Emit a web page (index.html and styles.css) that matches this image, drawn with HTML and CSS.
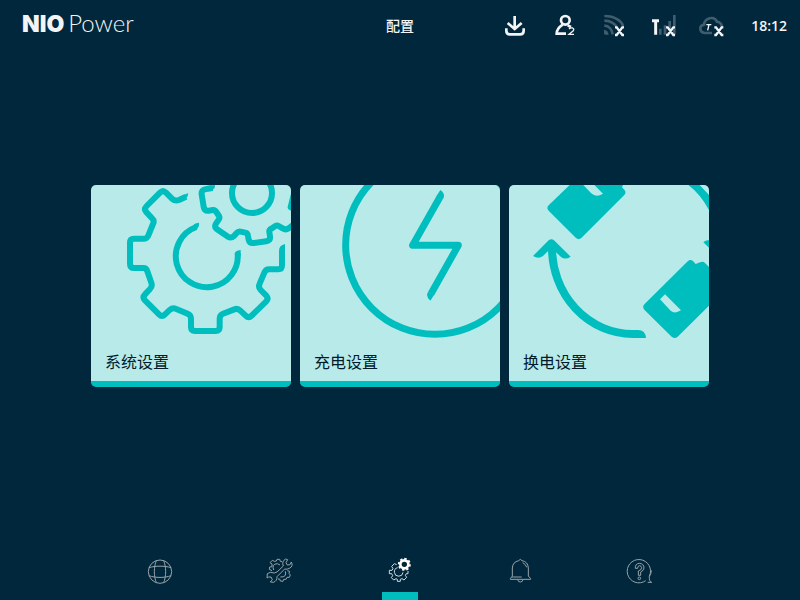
FILE: index.html
```html
<!DOCTYPE html>
<html lang="zh-CN">
<head>
<meta charset="utf-8">
<meta name="viewport" content="width=device-width, initial-scale=1">
<title>配置</title>
<link rel="stylesheet" href="styles.css">
</head>
<body>
<header class="topbar">
  <div class="brand"><span class="brand-bold">NIO</span><span class="brand-light">Power</span></div>
  <h1 class="title">配置</h1>
  <div class="status">
    <svg class="status-icon" viewBox="393 42 96 72" aria-hidden="true">
      <g class="line bold"><path d="M434 48V85M413 69L434 87L455 69M409 85V92Q409 103 420 103H450Q461 103 461 92V85"/></g>
    </svg>
    <svg class="status-icon" viewBox="540 42 96 72" aria-hidden="true">
      <g class="line bold"><circle cx="586" cy="61" r="13"/><path d="M578 74C566 82 560 90 560 101H588M593 76L603 81"/></g>
      <path class="line digit" d="M597 87Q602 82 608 84Q614 87 609 93L597 103H612"/>
    </svg>
    <svg class="status-icon" viewBox="27 42 96 72" aria-hidden="true">
      <g class="line dim"><path d="M43 48C75 48 97 64 99 79M43 62C62 62 77 72 82 84M43 77C56 77 66 88 68 103"/></g>
      <path class="fill-dim" d="M42 89Q54 91 56 104H46Q42 104 42 100Z"/>
      <path class="line cross" d="M75 82H80L97 105H102M102 82H97L80 105H75"/>
    </svg>
    <svg class="status-icon" viewBox="174 42 96 72" aria-hidden="true">
      <g class="line dim"><path d="M211 86V104M225 76V104M239 63V88M253 45V104"/></g>
      <path class="line letter" d="M186 62H207M197 62V104"/>
      <path class="line cross" d="M228 82H233L250 105H255M255 82H250L233 105H228"/>
    </svg>
    <svg class="status-icon" viewBox="321 42 96 72" aria-hidden="true">
      <path class="line dim" d="M366 99H344C328 97 326 78 342 74C344 54 373 46 381 65C392 66 398 77 395 84"/>
      <path class="line digit" d="M349 74H364M357 74L353 91"/>
      <path class="line cross" d="M373 82H378L395 105H400M400 82H395L378 105H373"/>
    </svg>
    <time class="clock">18:12</time>
  </div>
</header>

<main class="content">
  <div class="cards">
    <button class="card" type="button">
      <svg class="art" viewBox="18 15 600 588" aria-hidden="true">
        <g class="art-line">
          <path d="M303 50L282 60Q270 64 261 56L243 38Q234 29 225 38L185 78Q176 87 183 95L201 115Q209 122 204 132L191 164Q187 176 178 176H147Q135 176 135 188V251Q135 264 147 264H175Q184 264 187 274L199 308Q203 319 195 327L180 343Q171 352 180 361L222 403Q231 412 240 403L255 389Q263 382 272 386L308 401Q318 405 318 416V441Q318 453 330 453H392Q404 453 404 441V416Q404 405 414 401L448 388Q458 384 466 392L482 407Q491 416 500 407L543 365Q552 356 544 347L527 330Q519 322 524 311L538 278Q542 268 552 268H580Q591 268 591 256V211"/>
          <path d="M334 141A93 93 0 1 0 458 220"/>
          <circle cx="501" cy="39" r="60"/>
          <path d="M383 24L364 27Q348 29 350 43L356 80Q358 93 371 92L384 90Q390 89 394 96L402 108Q405 113 401 119L393 131Q387 140 395 147L429 170Q438 176 447 168L455 159Q460 153 467 155L481 158Q488 159 489 167L491 179Q494 191 506 189L544 184Q557 182 555 169L553 156Q552 150 559 146L571 138Q576 135 581 138L593 145Q602 151 611 145L628 132M626 45L617 82L632 88"/>
        </g>
        <path class="art-fill" d="M280 54L309 39Q311 52 294 62ZM582 212Q582 196 600 192V214ZM324 136Q329 129 342 128Q344 145 329 151ZM449 223Q449 211 467 210V227ZM368 18L390 15Q391 27 380 30Z"/>
      </svg>
      <span class="card-label">系统设置</span>
    </button>
    <button class="card" type="button">
      <svg class="art" viewBox="15 15 600 588" aria-hidden="true">
        <circle class="art-line wide" cx="420" cy="195" r="268"/>
        <path class="art-line wide" d="M435 51L353 196H490L408 341"/>
        <path class="art-fill" d="M425 47L436 30Q453 42 444 57ZM399 336L417 345L406 362Q391 349 399 336Z"/>
      </svg>
      <span class="card-label">充电设置</span>
    </button>
    <button class="card" type="button">
      <svg class="art" viewBox="18 15 600 588" aria-hidden="true">
        <path class="art-fill" d="M200 15L137 76Q129 84 137 92L219 174Q227 181 235 174L364 45Q371 37 364 29L357 22L360 15Z"/>
        <path class="art-cut" d="M241 15L264 39Q279 54 300 41L274 15Z"/>
        <path class="art-fill" d="M555 243L424 373Q417 381 424 389L506 470Q515 478 524 470L618 377V261L606 249Q600 243 591 247L578 252L570 243Q562 237 555 243Z"/>
        <path class="art-cut" d="M471 358L486 343L534 391Q515 403 503 392Z"/>
        <path class="art-line arrow" d="M147 202A242 259 0 0 0 389 462H407"/>
        <path class="art-fill" d="M90 228L137 181Q145 174 153 181L203 230Q187 241 174 231L145 203L120 228Q107 239 90 228ZM400 450Q427 447 429 474H400ZM556 15H590L618 45V90Q592 42 556 15ZM601 187Q609 179 618 181V203Z"/>
      </svg>
      <span class="card-label">换电设置</span>
    </button>
  </div>
</main>

<nav class="tabs">
  <a class="tab" href="#network" aria-label="网络">
    <svg class="tab-icon" viewBox="15 33 90 90" aria-hidden="true">
      <circle cx="60" cy="80" r="35"/><path d="M49 47C41 66 41 94 49 113M71 47C79 66 79 94 71 113M27 68C45 62 75 62 93 68M27 92C45 99 75 99 93 92"/>
    </svg>
  </a>
  <a class="tab" href="#maintenance" aria-label="维护">
    <svg class="tab-icon" viewBox="375 33 90 90" aria-hidden="true">
      <path d="M382 86Q390 79 403 84L411 81L430 63Q424 49 437 42L443 44L438 53L442 60L450 59L454 51Q461 64 448 70Q442 74 434 72L411 95Q412 108 400 112L391 111L397 104L393 96L386 96L381 99Z"/>
      <path d="M396 77L388 73L389 66L396 65L396 57L390 53L397 46L403 49L409 48L411 43H419L421 49L426 50M401 75Q394 57 412 56L420 60M442 77L449 79L447 85L451 90L448 97L441 97L438 103L431 103L429 109L421 108L419 102L414 102M436 79Q441 97 421 96"/>
    </svg>
  </a>
  <a class="tab active" href="#settings" aria-label="配置" aria-current="page">
    <svg class="tab-icon" viewBox="30 33 90 90" aria-hidden="true">
      <path d="M65 59L58 56L50 64L54 71L51 76H43V86H50L53 92L49 98L56 105L63 101L67 103V109H76V103L81 101L87 105L95 97L91 91L94 86H99V78M68 68A13 13 0 1 0 84 82"/>
      <circle class="mini-gear" cx="88" cy="58" r="12"/>
      <circle class="mini-teeth" cx="88" cy="58" r="17"/>
    </svg>
  </a>
  <a class="tab" href="#alerts" aria-label="通知">
    <svg class="tab-icon" viewBox="15 33 90 90" aria-hidden="true">
      <path d="M31 103H92V101L85 93V69Q84 50 66 47Q61 39 56 47Q38 51 37 69V93L31 101ZM36 96H65M68 53Q78 58 80 67M53 104Q54 111 61 111Q68 111 69 104"/>
    </svg>
  </a>
  <a class="tab" href="#help" aria-label="帮助">
    <svg class="tab-icon" viewBox="375 33 90 90" aria-hidden="true">
      <path d="M437 107A35 35 0 1 1 448 94Q447 110 455 112H443M448 94Q454 86 454 76"/>
      <path d="M406 70Q405 56 418 55Q432 56 432 69Q431 77 422 81V91H415V78Q425 75 425 68Q424 62 418 62Q413 63 413 70Z"/><circle cx="418" cy="100" r="4"/>
    </svg>
  </a>
</nav>
</body>
</html>
```
FILE: styles.css
```css
:root {
  --bg: #00273b;
  --teal: #00bebe;
  --pale: #b8eaea;
  --white: #f2f4f5;
  --dim: #405d6d;
}

* {
  box-sizing: border-box;
}

body {
  margin: 0;
  min-height: 100vh;
  display: flex;
  flex-direction: column;
  background: var(--bg);
  color: var(--white);
  font-family: "Open Sans", "Noto Sans CJK SC", sans-serif;
}

.topbar {
  display: grid;
  grid-template-columns: 1fr auto 1fr;
  align-items: center;
  height: 52px;
  padding: 0 13px;
}

.brand {
  display: flex;
  gap: 4px;
  align-items: baseline;
  line-height: 28px;
  padding: 0 0 6px 9px;
}

.brand-bold {
  font-family: Inter, sans-serif;
  font-size: 23px;
  font-weight: 900;
}

.brand-light {
  font-family: Lato, sans-serif;
  font-size: 24px;
  font-weight: 300;
}

.title {
  margin: 0;
  font-size: 14px;
  line-height: 20px;
  font-weight: 500;
}

.status {
  display: flex;
  justify-content: flex-end;
  align-items: center;
  gap: 17px;
}

.status-icon {
  flex: none;
  width: 32px;
  height: 24px;
}

.line {
  fill: none;
  stroke: var(--white);
  stroke-width: 5;
}

.bold {
  stroke-width: 8;
}

.letter {
  stroke-width: 9;
}

.digit {
  stroke-width: 4;
}

.cross {
  stroke-width: 7;
}

.dim {
  stroke: var(--dim);
  stroke-width: 8;
}

.fill-dim {
  fill: var(--dim);
}

.clock {
  min-width: 41px;
  text-align: right;
  font-size: 14px;
  line-height: 20px;
  font-weight: 600;
}

.content {
  flex: 1;
  display: flex;
  align-items: center;
  justify-content: center;
  padding: 16px 16px 52px;
}

.cards {
  display: flex;
  flex-wrap: wrap;
  justify-content: center;
  gap: 9px;
}

.card {
  position: relative;
  width: 200px;
  padding: 0;
  border: 0;
  border-bottom: 6px solid var(--teal);
  border-radius: 5px;
  overflow: hidden;
  background: var(--pale);
  color: #001c2b;
  font: inherit;
  text-align: left;
  cursor: pointer;
}

.art {
  display: block;
  width: 100%;
}

.art-line {
  fill: none;
  stroke: var(--teal);
  stroke-width: 18;
  stroke-linejoin: round;
}

.wide {
  stroke-width: 21;
}

.arrow {
  stroke-width: 24;
}

.art-fill {
  fill: var(--teal);
}

.art-cut {
  fill: var(--pale);
}

.card-label {
  position: absolute;
  left: 14px;
  bottom: 7px;
  font-size: 16px;
  line-height: 24px;
}

.tabs {
  display: grid;
  grid-template-columns: repeat(5, 1fr);
  width: 75%;
  margin: 0 auto;
}

.tab {
  display: flex;
  flex-direction: column;
  align-items: center;
  gap: 6px;
}

.tab::after {
  content: "";
  width: 36px;
  height: 8px;
}

.active::after {
  background: var(--teal);
}

.tab-icon {
  width: 30px;
  height: 30px;
  fill: none;
  stroke: #98a3a9;
  stroke-width: 3;
  stroke-linejoin: round;
}

.active .tab-icon {
  stroke: #d5dbde;
}

.tab-icon .mini-gear {
  stroke: #ffffff;
  stroke-width: 8;
}

.tab-icon .mini-teeth {
  stroke: #ffffff;
  stroke-width: 5;
  stroke-dasharray: 7 6;
}
```
